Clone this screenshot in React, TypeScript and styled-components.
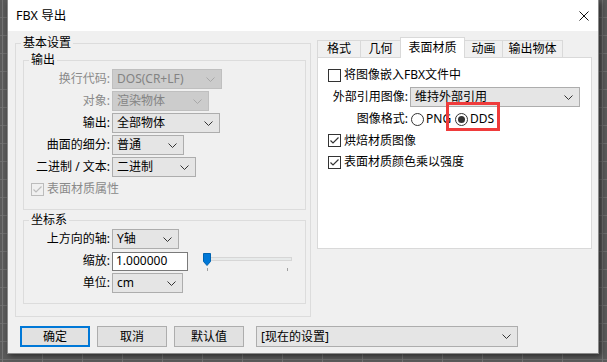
import styled, { createGlobalStyle } from 'styled-components';

const GlobalStyle = createGlobalStyle`
  html, body { margin: 0; padding: 0; }
  body {
    width: 607px;
    height: 362px;
    overflow: hidden;
    font-family: "Noto Sans", "Noto Sans CJK SC", sans-serif;
    font-size: 12px;
    line-height: 16px;
    color: #000;
  }
`;

const Screen = styled.div`
  width: 607px;
  height: 362px;
  box-sizing: border-box;
  padding-left: 7px;
  background-color: #5b5b5b;
  background-image:
    repeating-linear-gradient(to right, transparent 0 2px, #747474 2px 3px, transparent 3px 40px),
    repeating-linear-gradient(to bottom, transparent 0 17px, #6e6e6e 17px 18px);
`;

const Dialog = styled.div`
  width: 592px;
  height: 354px;
  box-sizing: border-box;
  background: #f0f0f0;
  border: 1px solid #8a8a8a;
  border-top: none;
  box-shadow: 2px 2px 6px rgba(0, 0, 0, 0.55);
  display: flex;
  flex-direction: column;
`;

const TitleBar = styled.div`
  height: 31px;
  flex: none;
  background: #fff;
  display: flex;
  align-items: center;
  justify-content: space-between;
  padding: 0 9px 0 8px;
`;

const Title = styled.span`
  font-size: 12.5px;
`;

const Body = styled.div`
  flex: 1;
  padding: 4px 6px 0 7px;
  display: flex;
  flex-direction: column;
`;

const MainRow = styled.div`
  display: flex;
  gap: 6px;
  align-items: flex-start;
`;

const Group = styled.fieldset<{ $width?: number }>`
  margin: 0;
  padding: 0;
  min-width: 0;
  box-sizing: border-box;
  border: 1px solid #dcdcdc;
  ${p => (p.$width ? `width: ${p.$width}px;` : '')}
`;

const Legend = styled.legend`
  margin-left: 5px;
  padding: 0 2px;
  line-height: 16px;
  font-size: 12px;
`;

const OuterBody = styled.div`
  display: flex;
  flex-direction: column;
  gap: 2px;
  padding: 1px 4px 12px 7px;
`;

const Form = styled.div<{ $label: number }>`
  display: grid;
  grid-template-columns: ${p => p.$label}px 1fr;
  grid-auto-rows: 20px;
  column-gap: 2px;
  row-gap: 2px;
  align-items: center;
  padding: 1px 0 10px;
`;

const Label = styled.span<{ $disabled?: boolean }>`
  text-align: right;
  white-space: nowrap;
  color: ${p => (p.$disabled ? '#8a8a8a' : '#000')};
`;

const Cell = styled.div`
  display: flex;
  align-items: center;
`;

const Combo = styled.div<{ $width: number; $disabled?: boolean; $height?: number }>`
  width: ${p => p.$width}px;
  height: ${p => p.$height ?? 20}px;
  box-sizing: border-box;
  display: flex;
  align-items: center;
  justify-content: space-between;
  padding: 0 6px 0 4px;
  background: ${p => (p.$disabled ? '#cccccc' : '#e5e5e5')};
  border: 1px solid ${p => (p.$disabled ? '#bfbfbf' : '#adadad')};
  color: ${p => (p.$disabled ? '#838383' : '#000')};
  white-space: nowrap;
`;

const TextInput = styled.div`
  width: 76px;
  height: 19px;
  box-sizing: border-box;
  border: 1px solid #7a7a7a;
  background: #fff;
  padding-left: 3px;
  display: flex;
  align-items: center;
`;

const SliderBox = styled.div`
  position: relative;
  width: 89px;
  height: 20px;
  margin-left: 15px;
`;

const Track = styled.div`
  position: absolute;
  left: 0;
  right: 0;
  top: 6px;
  height: 4px;
  box-sizing: border-box;
  background: #e7eaea;
  border: 1px solid #d6d6d6;
`;

const Thumb = styled.svg`
  position: absolute;
  left: 0;
  top: 2px;
`;

const Tick = styled.div<{ $left: number }>`
  position: absolute;
  top: 17px;
  left: ${p => p.$left}px;
  width: 1px;
  height: 3px;
  background: #a0a0a0;
`;

const CheckRow = styled.div<{ $indent?: number }>`
  grid-column: 1 / -1;
  display: flex;
  align-items: center;
  gap: 3px;
  padding-left: ${p => p.$indent ?? 0}px;
`;

const Box = styled.span<{ $disabled?: boolean }>`
  width: 13px;
  height: 13px;
  flex: none;
  box-sizing: border-box;
  border: 1px solid ${p => (p.$disabled ? '#bcbcbc' : '#333')};
  background: ${p => (p.$disabled ? '#f0f0f0' : '#fff')};
  display: inline-flex;
  align-items: center;
  justify-content: center;
`;

const RightColumn = styled.div`
  width: 275px;
  margin-top: 2px;
`;

const TabStrip = styled.div`
  display: flex;
  align-items: flex-end;
  height: 20px;
  position: relative;
  z-index: 1;
`;

const Tab = styled.div<{ $width: number; $active?: boolean }>`
  box-sizing: border-box;
  width: ${p => p.$width}px;
  height: ${p => (p.$active ? 21 : 17)}px;
  margin-bottom: ${p => (p.$active ? -1 : 0)}px;
  margin-left: -1px;
  &:first-child { margin-left: 0; }
  border: 1px solid #d9d9d9;
  border-bottom: none;
  background: ${p => (p.$active ? '#ffffff' : '#f0f0f0')};
  display: flex;
  align-items: center;
  justify-content: center;
  position: relative;
  z-index: ${p => (p.$active ? 2 : 1)};
`;

const Panel = styled.div`
  position: relative;
  height: 192px;
  box-sizing: border-box;
  border: 1px solid #d9d9d9;
  background: #ffffff;
  padding: 8px 0 0 10px;
`;

const PanelForm = styled.div`
  display: grid;
  grid-template-columns: 80px 1fr;
  grid-template-rows: 18px 20px 18px 19px 18px;
  column-gap: 2px;
  row-gap: 3px;
  align-items: center;
`;

const RadioGroup = styled.div`
  display: grid;
  grid-template-columns: 44px auto;
  padding-left: 1px;
`;

const RadioOption = styled.span`
  display: flex;
  align-items: center;
  gap: 2px;
`;

const RadioCircle = styled.span<{ $checked?: boolean }>`
  width: 13px;
  height: 13px;
  box-sizing: border-box;
  border-radius: 50%;
  border: 1px solid #333;
  background: #fff;
  display: inline-flex;
  align-items: center;
  justify-content: center;
  &::after {
    content: '';
    width: 7px;
    height: 7px;
    border-radius: 50%;
    background: ${p => (p.$checked ? '#333' : 'transparent')};
  }
`;

const Highlight = styled.div`
  position: absolute;
  left: 128px;
  top: 44px;
  width: 54px;
  height: 29px;
  box-sizing: border-box;
  border: 3px solid #ef3b3b;
`;

const ButtonRow = styled.div`
  display: flex;
  align-items: center;
  gap: 7px;
  margin-top: 9px;
  padding-left: 5px;
`;

const Button = styled.div<{ $default?: boolean }>`
  width: 70px;
  height: 21px;
  box-sizing: border-box;
  background: #e1e1e1;
  border: ${p => (p.$default ? '2px solid #0078d7' : '1px solid #adadad')};
  display: flex;
  align-items: center;
  justify-content: center;
`;

const PresetCombo = styled(Combo)`
  margin-left: 5px;
`;

const Chevron = ({ disabled }: { disabled?: boolean }) => (
  <svg width="9" height="5" viewBox="0 0 9 5">
    <polyline
      points="0.5,0.5 4.5,4.5 8.5,0.5"
      fill="none"
      stroke={disabled ? '#a8a8a8' : '#333'}
      strokeWidth="1"
    />
  </svg>
);

const Select = ({ value, width, disabled, height }: { value: string; width: number; disabled?: boolean; height?: number }) => (
  <Combo $width={width} $disabled={disabled} $height={height}>
    <span>{value}</span>
    <Chevron disabled={disabled} />
  </Combo>
);

const Check = ({ checked, disabled }: { checked?: boolean; disabled?: boolean }) => (
  <Box $disabled={disabled}>
    {checked && (
      <svg width="11" height="11" viewBox="0 0 11 11">
        <polyline
          points="1.5,5.5 4,8 9.5,2.5"
          fill="none"
          stroke={disabled ? '#bcbcbc' : '#333'}
          strokeWidth="1.2"
        />
      </svg>
    )}
  </Box>
);

const tabs = [
  { label: '格式', width: 44 },
  { label: '几何', width: 41 },
  { label: '表面材质', width: 65, active: true },
  { label: '动画', width: 39 },
  { label: '输出物体', width: 61 },
];

export default function App() {
  return (
    <>
      <GlobalStyle />
      <Screen>
        <Dialog>
          <TitleBar>
            <Title>FBX 导出</Title>
            <svg width="10" height="10" viewBox="0 0 10 10">
              <path d="M0.5 0.5 L9.5 9.5 M9.5 0.5 L0.5 9.5" stroke="#111" strokeWidth="1" />
            </svg>
          </TitleBar>
          <Body>
            <MainRow>
              <Group $width={296}>
                <Legend>基本设置</Legend>
                <OuterBody>
                  <Group>
                    <Legend>输出</Legend>
                    <Form $label={86}>
                      <Label $disabled>换行代码:</Label>
                      <Cell><Select value="DOS(CR+LF)" width={110} disabled /></Cell>
                      <Label $disabled>对象:</Label>
                      <Cell><Select value="渲染物体" width={97} disabled /></Cell>
                      <Label>输出:</Label>
                      <Cell><Select value="全部物体" width={108} /></Cell>
                      <Label>曲面的细分:</Label>
                      <Cell><Select value="普通" width={72} /></Cell>
                      <Label>二进制 / 文本:</Label>
                      <Cell><Select value="二进制" width={84} /></Cell>
                      <CheckRow $indent={7}>
                        <Check checked disabled />
                        <Label $disabled>表面材质属性</Label>
                      </CheckRow>
                    </Form>
                  </Group>
                  <Group>
                    <Legend>坐标系</Legend>
                    <Form $label={86}>
                      <Label>上方向的轴:</Label>
                      <Cell><Select value="Y轴" width={67} /></Cell>
                      <Label>缩放:</Label>
                      <Cell>
                        <TextInput>1.000000</TextInput>
                        <SliderBox>
                          <Track />
                          <Thumb width="8" height="13" viewBox="0 0 8 13">
                            <path d="M0.5 0.5 H7.5 V8.5 L4 12.5 L0.5 8.5 Z" fill="#0078d7" stroke="#0063b1" strokeWidth="1" />
                          </Thumb>
                          <Tick $left={4} />
                          <Tick $left={84} />
                        </SliderBox>
                      </Cell>
                      <Label>单位:</Label>
                      <Cell><Select value="cm" width={71} /></Cell>
                    </Form>
                  </Group>
                </OuterBody>
              </Group>
              <RightColumn>
                <TabStrip>
                  {tabs.map(t => (
                    <Tab key={t.label} $width={t.width} $active={t.active}>
                      {t.label}
                    </Tab>
                  ))}
                </TabStrip>
                <Panel>
                  <PanelForm>
                    <CheckRow>
                      <Check />
                      <span>将图像嵌入FBX文件中</span>
                    </CheckRow>
                    <Label>外部引用图像:</Label>
                    <Cell><Select value="维持外部引用" width={170} /></Cell>
                    <Label>图像格式:</Label>
                    <RadioGroup>
                      <RadioOption>
                        <RadioCircle />
                        <span>PNG</span>
                      </RadioOption>
                      <RadioOption>
                        <RadioCircle $checked />
                        <span>DDS</span>
                      </RadioOption>
                    </RadioGroup>
                    <CheckRow>
                      <Check checked />
                      <span>烘焙材质图像</span>
                    </CheckRow>
                    <CheckRow>
                      <Check checked />
                      <span>表面材质颜色乘以强度</span>
                    </CheckRow>
                  </PanelForm>
                  <Highlight />
                </Panel>
              </RightColumn>
            </MainRow>
            <ButtonRow>
              <Button $default>确定</Button>
              <Button>取消</Button>
              <Button>默认值</Button>
              <PresetCombo $width={262} $height={21}>
                <span>[现在的设置]</span>
                <Chevron />
              </PresetCombo>
            </ButtonRow>
          </Body>
        </Dialog>
      </Screen>
    </>
  );
}
